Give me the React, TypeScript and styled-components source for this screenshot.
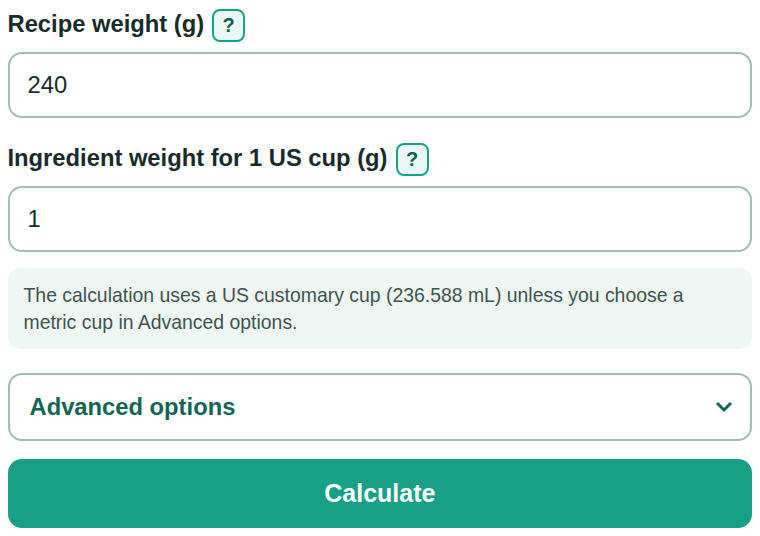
import { createGlobalStyle } from "styled-components";
import styled from "styled-components";

const GlobalStyle = createGlobalStyle`
  * {
    box-sizing: border-box;
  }

  body {
    margin: 0;
    background: #fff;
    font-family: "Liberation Sans", Arial, sans-serif;
  }
`;

const Form = styled.form`
  display: flex;
  flex-direction: column;
  width: 744.75px;
  margin-left: 7.5px;
  padding-top: 9px;
`;

const Field = styled.div`
  display: flex;
  flex-direction: column;
  margin-bottom: 16px;

  & + & {
    margin-top: 9px;
  }
`;

const LabelRow = styled.div`
  display: flex;
  align-items: center;
  gap: 8px;
  height: 32px;
  margin-bottom: 11px;
`;

const Label = styled.label`
  position: relative;
  top: -1px;
  font-size: 23.75px;
  font-weight: 700;
  color: #172b2b;
`;

const HelpButton = styled.button`
  width: 33px;
  height: 33px;
  padding: 0;
  border: 2px solid #17a085;
  border-radius: 8px;
  background: #eaf8f5;
  color: #0f5e50;
  font-family: inherit;
  font-size: 20px;
  font-weight: 700;
`;

const Input = styled.input`
  width: 100%;
  height: 66px;
  padding: 0 18px;
  border: 2px solid #a3bdb6;
  border-radius: 14px;
  background: #fff;
  color: #172b2b;
  font-family: inherit;
  font-size: 23.75px;
`;

const Note = styled.p`
  margin: 0 0 24px;
  padding: 14px 16px 13px;
  border-radius: 13px;
  background: #f0f6f4;
  color: #3f5450;
  font-size: 19.42px;
  line-height: 27px;
`;

const Advanced = styled.div`
  display: flex;
  align-items: center;
  justify-content: space-between;
  height: 68px;
  margin-bottom: 18px;
  padding: 0 17px 0 20px;
  border: 2px solid #a3bdb6;
  border-radius: 14px;
  color: #0f6553;
  font-size: 23.75px;
  font-weight: 700;
`;

const Chevron = styled.svg`
  width: 18px;
  height: 12px;
  fill: none;
  stroke: #0f6553;
  stroke-width: 3;
`;

const Submit = styled.button`
  height: 69px;
  border: 0;
  border-radius: 14px;
  background: #17a085;
  color: #fff;
  font-family: inherit;
  font-size: 25px;
  font-weight: 700;
`;

export default function App() {
  return (
    <>
      <GlobalStyle />
      <Form>
        <Field>
          <LabelRow>
            <Label>Recipe weight (g)</Label>
            <HelpButton type="button">?</HelpButton>
          </LabelRow>
          <Input defaultValue="240" />
        </Field>
        <Field>
          <LabelRow>
            <Label>Ingredient weight for 1 US cup (g)</Label>
            <HelpButton type="button">?</HelpButton>
          </LabelRow>
          <Input defaultValue="1" />
        </Field>
        <Note>
          The calculation uses a US customary cup (236.588 mL) unless you choose a metric cup in Advanced options.
        </Note>
        <Advanced>
          Advanced options
          <Chevron viewBox="0 0 18 12">
            <path d="M2 2l7 7 7-7" />
          </Chevron>
        </Advanced>
        <Submit type="button">Calculate</Submit>
      </Form>
    </>
  );
}
